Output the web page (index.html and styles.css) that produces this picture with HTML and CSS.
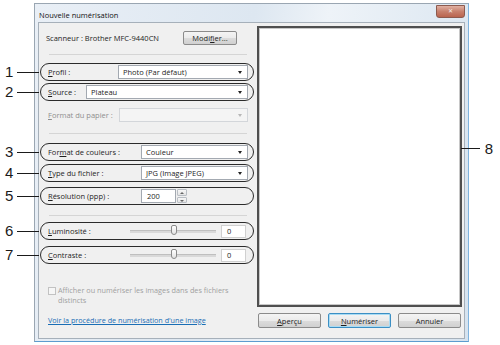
FILE: index.html
```html
<!DOCTYPE html>
<html lang="fr">
<head>
    <meta charset="UTF-8">
    <title>Nouvelle numérisation</title>
    <link rel="stylesheet" href="styles.css">
</head>
<body>
    <div class="window">
        <div class="titlebar">
            <span class="title">Nouvelle numérisation</span>
            <span class="close">&#x2715;</span>
        </div>
        <div class="client">
            <div class="settings">
                <div class="row scanner-row">
                    <span class="scanner">Scanneur : Brother MFC-9440CN</span>
                    <button class="btn btn-modify">Modi<u>f</u>ier...</button>
                </div>
                <hr class="sep sep-1">

                <div class="row pill callout" data-n="1">
                    <span class="label"><u>P</u>rofil :</span>
                    <div class="combo">Photo (Par défaut)<i class="arrow"></i></div>
                </div>
                <div class="row pill pill-source callout" data-n="2">
                    <span class="label label-short"><u>S</u>ource :</span>
                    <div class="combo">Plateau<i class="arrow"></i></div>
                </div>
                <div class="row plain disabled">
                    <span class="label"><u>F</u>ormat du papier :</span>
                    <div class="combo is-disabled"><i class="arrow"></i></div>
                </div>
                <hr class="sep sep-2">

                <div class="row pill pill-wide callout" data-n="3">
                    <span class="label">For<u>m</u>at de couleurs :</span>
                    <div class="combo">Couleur<i class="arrow"></i></div>
                </div>
                <div class="row pill pill-wide pill-type callout" data-n="4">
                    <span class="label"><u>T</u>ype du fichier :</span>
                    <div class="combo">JPG (Image JPEG)<i class="arrow"></i></div>
                </div>
                <div class="row pill pill-wide pill-res callout" data-n="5">
                    <span class="label"><u>R</u>ésolution (ppp) :</span>
                    <div class="spin">
                        <div class="spin-value">200</div>
                        <div class="spin-buttons"><i class="up"></i><i class="down"></i></div>
                    </div>
                </div>
                <hr class="sep sep-3">

                <div class="row pill pill-slider callout" data-n="6">
                    <span class="label"><u>L</u>uminosité :</span>
                    <div class="slider"><i class="thumb"></i></div>
                    <div class="value">0</div>
                </div>
                <div class="row pill pill-slider callout" data-n="7">
                    <span class="label"><u>C</u>ontraste :</span>
                    <div class="slider"><i class="thumb"></i></div>
                    <div class="value">0</div>
                </div>

                <div class="check">
                    <i class="box"></i>
                    <span class="check-text">Afficher ou numériser les images dans des fichiers distincts</span>
                </div>
                <a class="link" href="#">Voir la procédure de numérisation d'une image</a>
            </div>

            <div class="side">
                <div class="preview callout-right" data-n="8"></div>
                <div class="actions">
                    <button class="btn"><u>A</u>perçu</button>
                    <button class="btn btn-default"><u>N</u>umériser</button>
                    <button class="btn">Annuler</button>
                </div>
            </div>
        </div>
    </div>
</body>
</html>
```

FILE: styles.css
```css
body {
    margin: 0;
    background: #ffffff;
    font-family: "Open Sans", "DejaVu Sans", sans-serif;
    font-size: 7.5px;
    color: #1e1e1e;
}
.window {
    margin: 3px 0 0 34px;
    width: 435px;
    height: 339px;
    box-sizing: border-box;
    border: 1px solid #9aa6b2;
    border-bottom-color: #5d9ccf;
    border-right-color: #7fb3de;
    background: linear-gradient(100deg, #e9eff6 0%, #dde7f1 45%, #eef3f8 60%, #d6e3ef 100%);
    display: flex;
    flex-direction: column;
}
.titlebar {
    height: 18px;
    display: flex;
    justify-content: space-between;
    align-items: flex-start;
    padding: 0 3px 0 4px;
}
.title {
    margin-top: 6px;
    color: #111;
}
.close {
    width: 27px;
    height: 11px;
    margin-top: 1px;
    border: 1px solid #8d5a4e;
    border-radius: 0 0 3px 3px;
    background: linear-gradient(#e1b1a3, #c7806d 50%, #b9644f);
    color: #f4ecea;
    font-size: 6px;
    line-height: 11px;
    text-align: center;
}
.client {
    flex: 1;
    margin: 0 3px 2px 3px;
    border: 1px solid #a6b0ba;
    background: #f0f0f0;
    display: flex;
}
.settings {
    width: 214px;
    padding-left: 1px;
    display: flex;
    flex-direction: column;
}
.row {
    display: flex;
    align-items: center;
    position: relative;
    box-sizing: border-box;
}
.scanner-row {
    height: 14px;
    margin-top: 8px;
    padding-left: 6px;
    justify-content: space-between;
    padding-right: 17px;
}
.sep {
    border: 0;
    border-top: 1px solid #d5d5d5;
    margin: 0 7px 0 9px;
    height: 0;
}
.sep-1 { margin-top: 9px; }
.sep-2 { margin-top: 10px; }
.sep-3 { margin-top: 10px; }
.pill {
    height: 18px;
    border: 1.5px solid #2b2b2b;
    border-radius: 9px;
    padding: 0 5px 0 7px;
}
.sep-1 + .pill { margin-top: 8px; }
.pill-source { margin-top: 2px; }
.sep-2 + .pill { margin-top: 9px; }
.pill-type { margin-top: 3px; }
.pill-res { margin-top: 5px; }
.pill-slider { margin-top: 6px; }
.plain {
    height: 16px;
    margin-top: 6px;
    padding: 0 6px 0 8px;
}
.label {
    width: 70px;
    flex: none;
}
.plain .label { width: 71px; }
.label-short { width: 38px; }
.pill-wide .label { width: 93px; }
.pill-slider .label { width: 82px; }
.disabled { color: #8f8f8f; }
.combo {
    flex: 1;
    height: 14px;
    box-sizing: border-box;
    border: 1px solid #a3a9b1;
    background: #ffffff;
    padding-left: 4px;
    line-height: 12px;
    position: relative;
    color: #1e1e1e;
}
.combo.is-disabled {
    border-color: #d3d6da;
    background: #f4f4f4;
}
.arrow {
    position: absolute;
    right: 5px;
    top: 5px;
    border-left: 2.5px solid transparent;
    border-right: 2.5px solid transparent;
    border-top: 3px solid #222;
}
.is-disabled .arrow { border-top-color: #b7b7b7; }
.spin {
    display: flex;
    height: 14px;
}
.spin-value {
    width: 35px;
    box-sizing: border-box;
    border: 1px solid #a3a9b1;
    background: #fff;
    padding-left: 5px;
    line-height: 12px;
}
.spin-buttons {
    width: 10px;
    display: flex;
    flex-direction: column;
    margin-left: 1px;
    gap: 1px;
}
.spin-buttons i {
    flex: 1;
    border: 1px solid #b9bec4;
    background: linear-gradient(#f7f7f7, #e4e4e4);
    border-radius: 1px;
    position: relative;
}
.spin-buttons i::after {
    content: "";
    position: absolute;
    left: 2px;
    top: 2px;
    border-left: 2px solid transparent;
    border-right: 2px solid transparent;
}
.spin-buttons .up::after { border-bottom: 2px solid #666; }
.spin-buttons .down::after { border-top: 2px solid #666; }
.slider {
    width: 86px;
    height: 2px;
    background: #d9d9d9;
    border-top: 1px solid #bfbfbf;
    position: relative;
}
.thumb {
    position: absolute;
    left: 41px;
    top: -6px;
    width: 6px;
    height: 10px;
    box-sizing: border-box;
    border: 1px solid #8a8a8a;
    border-radius: 2px 2px 3px 3px;
    background: linear-gradient(#ffffff, #e2e2e2);
}
.value {
    width: 25px;
    height: 13px;
    margin-left: auto;
    margin-right: 2px;
    box-sizing: border-box;
    border: 1px solid #d0d0d0;
    background: #fff;
    padding-left: 5px;
    line-height: 11px;
}
.check {
    display: flex;
    align-items: flex-start;
    margin: 22px 16px 0 8px;
    color: #a0a0a0;
    line-height: 9.5px;
}
.check-text {
    font-size: 7.3px;
}
.box {
    flex: none;
    width: 8px;
    height: 8px;
    box-sizing: border-box;
    border: 1px solid #c2c2c2;
    background: #f6f6f6;
    margin-right: 2px;
    margin-top: 1px;
}
.link {
    margin: 10px 0 0 8px;
    font-size: 7.2px;
    color: #1a6eb5;
    text-decoration: underline;
}
.side {
    margin-left: 3px;
    display: flex;
    flex-direction: column;
}
.preview {
    width: 205px;
    height: 281px;
    margin-top: 3px;
    box-sizing: border-box;
    border: 2px solid #4f4f4f;
    box-shadow: inset 0 0 0 1px #c8c8c8;
    background: #ffffff;
    position: relative;
}
.actions {
    display: flex;
    gap: 7px;
    margin-top: 6px;
    padding-left: 1px;
}
.btn {
    font: inherit;
    color: #1e1e1e;
    width: 63px;
    height: 15px;
    padding: 0;
    border: 1px solid #8b8b8b;
    border-radius: 2px;
    background: linear-gradient(#f4f4f4 0%, #ebebeb 50%, #dcdcdc 51%, #d0d0d0 100%);
}
.btn-modify {
    width: 54px;
    height: 14px;
}
.btn-default {
    border-color: #3c8fc4;
    box-shadow: inset 0 0 0 1px #a9dcf4;
}
.callout::before {
    content: attr(data-n);
    position: absolute;
    left: -36px;
    top: 50%;
    transform: translateY(-52%);
    font-family: "Liberation Sans", sans-serif;
    font-size: 15px;
    color: #1a1a1a;
}
.callout::after {
    content: "";
    position: absolute;
    left: -24px;
    top: 50%;
    width: 22px;
    border-top: 1px solid #1a1a1a;
}
.callout-right::before {
    content: attr(data-n);
    position: absolute;
    right: -33px;
    top: 112px;
    font-family: "Liberation Sans", sans-serif;
    font-size: 15px;
    color: #1a1a1a;
}
.callout-right::after {
    content: "";
    position: absolute;
    right: -20px;
    top: 120px;
    width: 19px;
    border-top: 1px solid #1a1a1a;
}
```
